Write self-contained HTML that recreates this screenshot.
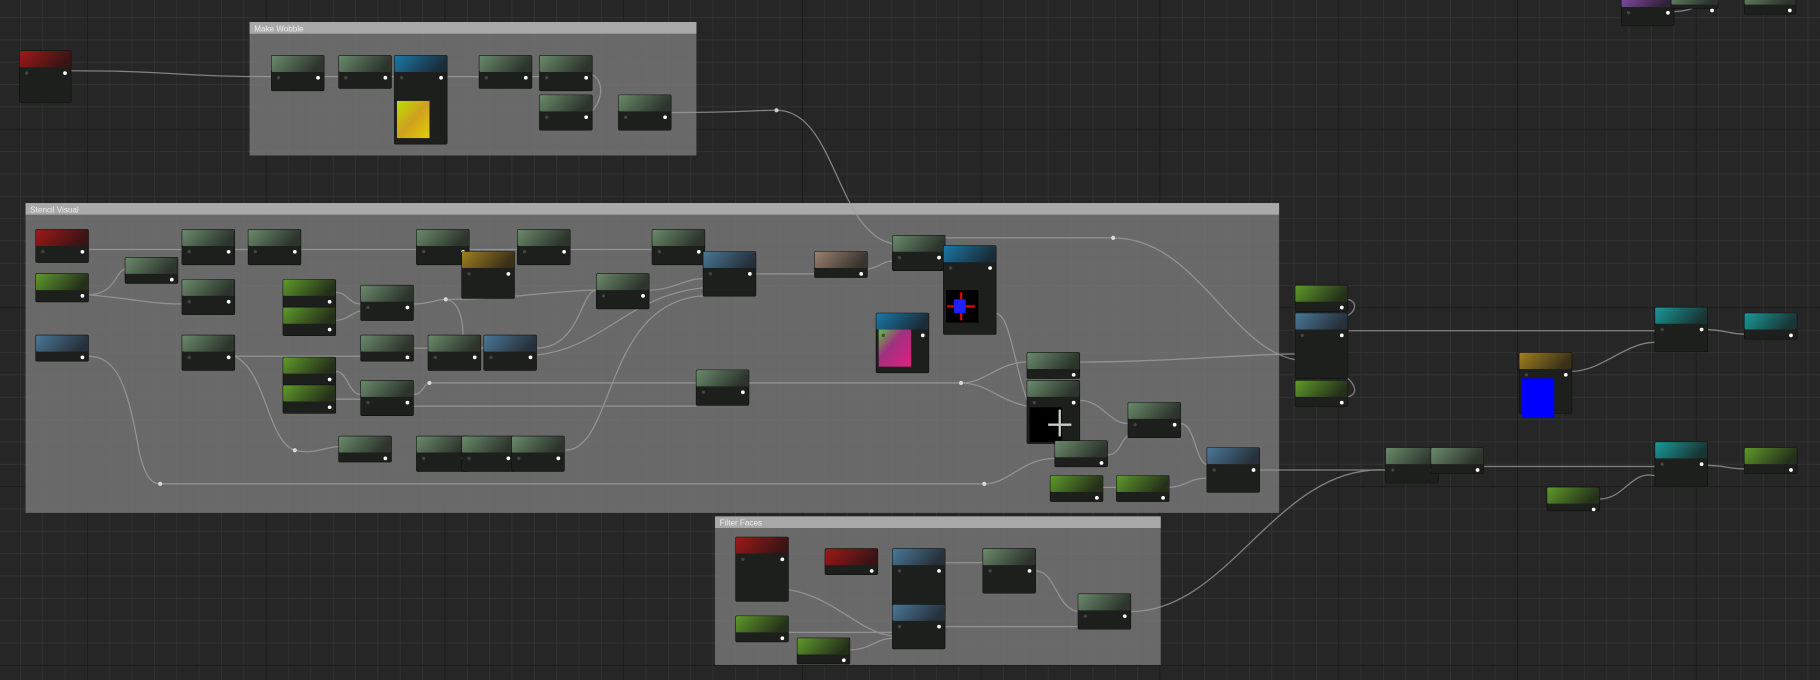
<!DOCTYPE html>
<html><head><meta charset="utf-8">
<style>
html,body{margin:0;padding:0;background:#262626;overflow:hidden}
svg{display:block}
text{font-family:"Liberation Sans",sans-serif}
</style></head>
<body>
<svg id="s" width="1820" height="680" viewBox="0 0 1568 586" preserveAspectRatio="none" xmlns="http://www.w3.org/2000/svg">
<defs>
<pattern id="minor" x="17.25" y="14.75" width="19.25" height="19.25" patternUnits="userSpaceOnUse">
<path d="M0 0H19.25M0 0V19.25" stroke="#363636" stroke-width="1.2" fill="none"/>
</pattern>
<pattern id="major" x="75" y="111" width="154" height="154" patternUnits="userSpaceOnUse">
<path d="M0 0H154M0 0V154" stroke="#151515" stroke-width="1.3" fill="none"/>
</pattern>
<linearGradient id="tex1" x1="0" y1="0" x2="1" y2="1"><stop offset="0" stop-color="#b8e000"/><stop offset=".5" stop-color="#d0a020"/><stop offset="1" stop-color="#e0d000"/></linearGradient>
<linearGradient id="tex2" x1="0" y1="0" x2="1" y2="1"><stop offset="0" stop-color="#60c040"/><stop offset=".4" stop-color="#a03080"/><stop offset="1" stop-color="#e02080"/></linearGradient>
</defs>
<rect width="1568" height="586" fill="#262626"/>
<rect width="1568" height="586" fill="url(#minor)"/>
<rect width="1568" height="586" fill="url(#major)"/>
<g id="comments"></g>
<g id="wires" fill="none" stroke="#a0a0a0" stroke-width="1.1" opacity=".75"></g>
<g id="nodes"></g>
</svg>
<script>
var NS="http://www.w3.org/2000/svg",s=document.getElementById('s');
function el(p,t,a){var e=document.createElementNS(NS,t);for(var k in a)e.setAttribute(k,a[k]);p.appendChild(e);return e;}
var C=document.getElementById('comments');
function comment(x,y,w,h,t){el(C,'rect',{x:x,y:y,width:w,height:h,fill:'#767676',opacity:.85});el(C,'rect',{x:x,y:y,width:w,height:10,fill:'#a9a9a9'});var tx=el(C,'text',{x:x+4,y:y+8,fill:'#eee','font-size':7});tx.textContent=t;}
comment(215,19,385,115,'Make Wobble');
comment(22,175,1080,267,'Stencil Visual');
comment(616,445,384,128,'Filter Faces');
var W=document.getElementById('wires');
var wires=[
"M61 61C150 61 150 66 234 66","M578 97C640 97 650 95 669 95C720 95 720 200 769 210","M510 64C520 70 520 84 510 96","M384 66H413","M279 66H292","M337 66H340","M458 66H465",
"M76 215H157","M76 254C100 254 100 232 108 232","M76 254C120 258 130 262 157 262","M202 215H214","M259 215H359","M404 215H446","M491 215H562","M607 215C610 225 610 236 606 236","M651 236H702","M747 232C760 230 760 225 769 225","M814 205C870 205 900 205 959 205C1030 205 1060 300 1116 310",
"M289 252C300 252 300 262 311 262","M289 276C300 276 305 268 311 268","M356 262C370 262 375 258 384 258C440 258 480 250 514 250","M559 250C580 250 590 240 606 240","M384 258C400 260 400 290 398 300",
"M76 307C100 307 110 330 120 390C125 410 130 417 138 417H848C870 417 880 395 909 395","M202 307H311","M202 307C230 320 230 380 254 388C270 392 280 385 292 385","M356 300H369","M414 300H417","M462 300C500 300 500 250 514 250","M462 306C520 300 540 255 606 248",
"M289 320C300 320 300 340 311 340","M289 344H311","M356 340C365 340 365 330 370 330H600C680 330 750 330 828 330C850 330 860 345 885 350","M356 350H600","M487 388C530 388 520 260 606 255",
"M828 330C850 330 860 312 885 312","M858 270C870 270 875 320 885 345","M930 312C1000 312 1080 305 1116 305","M930 345C950 345 955 365 972 365","M1017 365C1030 365 1030 400 1040 400","M954 392C965 392 965 380 972 375","M950 420H962","M1007 420C1020 420 1025 412 1040 412",
"M1084 405H1194","M1278 402H1426","M1469 401C1485 401 1490 404 1503 404","M1378 430C1400 430 1405 405 1426 410","M1162 285H1426","M1469 284C1485 284 1490 288 1503 288","M1354 320C1380 320 1400 295 1426 295","M1161 258C1170 260 1168 268 1161 272","M1161 342C1170 340 1168 332 1161 326",
"M974 527C1060 527 1100 400 1194 405","M679 508C720 515 740 545 769 548","M814 485H847","M814 510H769","M892 492C910 492 910 525 929 527","M814 540H929","M732 560C750 560 755 550 769 550","M679 545H769","M1442 10C1460 10 1470 0 1480 0"
];
wires.forEach(function(d){el(W,'path',{d:d});});
[[669,95],[959,205],[384,258],[370,330],[828,330],[254,388],[138,417],[848,417],[1236,404]].forEach(function(p){el(W,'circle',{cx:p[0],cy:p[1],r:1.8,fill:'#fff',stroke:'none'});});
var N=document.getElementById('nodes');
var cols={g:['#6a8a6a','#2c342c'],l:['#5f9a2a','#25301a'],b:['#4a7898','#26303a'],r:['#a01818','#3a1414'],t:['#189a9a','#1a3434'],y:['#a08020','#3a3018'],p:['#8a50b0','#302038'],n:['#9a8270','#3a342e'],B:['#1a78a8','#1a2c38']};
var gi=0;
function node(x,y,w,h,c,tex){
 var g=el(N,'g',{});
 var id='hg'+(gi++);var lg=el(s.querySelector('defs'),'linearGradient',{id:id,x1:0,y1:0,x2:1,y2:.3});
 el(lg,'stop',{offset:0,'stop-color':cols[c][0]});el(lg,'stop',{offset:1,'stop-color':cols[c][1]});
 el(g,'rect',{x:x-.5,y:y-.5,width:w+1,height:h+1,fill:'#0d0e0d',rx:1.5});
 el(g,'rect',{x:x,y:y,width:w,height:h,fill:'#1d1f1d',rx:1});
 el(g,'rect',{x:x,y:y,width:w,height:14,fill:'url(#'+id+')',rx:1});
 if(tex){el(g,'rect',{x:x+2,y:tex[0],width:28,height:tex[1],fill:tex[2]});}
 el(g,'circle',{cx:x+w-5,cy:y+19,r:1.6,fill:'#fff'});
 if(h>26)el(g,'circle',{cx:x+6,cy:y+19,r:1.4,fill:'#444'});
}
var list=[
[17,44,44,44,'r'],[1397,-8,45,30,'p'],[1440,-10,40,17,'g'],[1503,-10,44,22,'g'],
[234,48,45,30,'g'],[292,48,45,28,'g'],[340,48,45,76,'B',[87,32,'url(#tex1)']],[413,48,45,28,'g'],[465,48,45,30,'g'],[465,82,45,30,'g'],[533,82,45,30,'g'],
[31,198,45,28,'r'],[31,236,45,24,'l'],[108,222,45,22,'g'],[157,198,45,30,'g'],[214,198,45,30,'g'],[157,241,45,30,'g'],[244,241,45,24,'l'],[244,265,45,24,'l'],[311,246,45,30,'g'],[359,198,45,30,'g'],[398,217,45,40,'y'],[446,198,45,30,'g'],[514,236,45,30,'g'],[562,198,45,30,'g'],[606,217,45,38,'b'],
[31,289,45,22,'b'],[157,289,45,30,'g'],[244,308,45,24,'l'],[244,332,45,24,'l'],[311,289,45,22,'g'],[369,289,45,30,'g'],[417,289,45,30,'b'],[311,328,45,30,'g'],[600,319,45,30,'g'],
[702,217,45,22,'n'],[769,203,45,30,'g'],[813,212,45,76,'B',[250,28,'#000']],[755,270,45,51,'B',[284,32,'url(#tex2)']],[885,304,45,22,'g'],[885,328,45,54,'g',[351,30,'#000']],
[292,376,45,22,'g'],[359,376,45,30,'g'],[398,376,45,30,'g'],[441,376,45,30,'g'],[909,380,45,22,'g'],[972,347,45,30,'g'],[905,410,45,22,'l'],[962,410,45,22,'l'],[1040,386,45,38,'b'],
[1116,246,45,22,'l'],[1116,270,45,56,'b'],[1116,328,45,22,'l'],[1309,304,45,52,'y',[326,34,'#0000ff']],[1426,265,45,38,'t'],[1503,270,45,22,'t'],[1194,386,45,30,'g'],[1233,386,45,22,'g'],[1426,381,45,38,'t'],[1503,386,45,22,'l'],[1333,420,45,20,'l'],
[634,463,45,55,'r'],[711,473,45,22,'r'],[769,473,45,56,'b'],[847,473,45,38,'g'],[769,521,45,38,'b'],[929,512,45,30,'g'],[634,531,45,22,'l'],[687,550,45,22,'l']
];
list.forEach(function(a){node(a[0],a[1],a[2],a[3],a[4],a[5]);});
el(N,'path',{d:'M828 252V276M816 264H840',stroke:'#e00000','stroke-width':2});
el(N,'rect',{x:822,y:258,width:10,height:12,fill:'#2020ff'});
el(N,'path',{d:'M913 353V376M903 366H923',stroke:'#ccc','stroke-width':2});
</script>
</body></html>
